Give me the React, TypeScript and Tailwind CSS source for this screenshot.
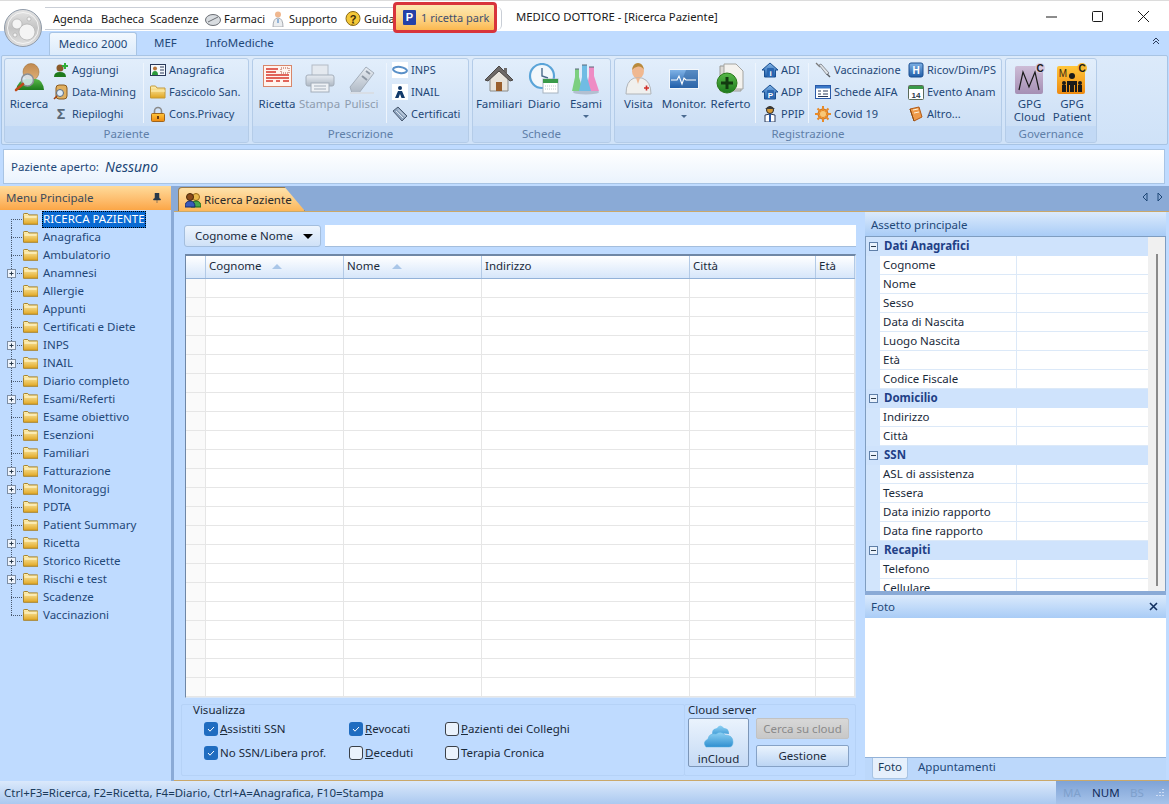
import React from "react";

const S = ({ n = 16, children }: { n?: number; children: React.ReactNode }) => (
  <svg width={n} height={n} viewBox={`0 0 ${n} ${n}`} className="shrink-0">{children}</svg>
);

const Defs = () => (
  <svg width="0" height="0" className="absolute">
    <defs>
      <linearGradient id="folder" x1="0" y1="0" x2="0" y2="1"><stop offset="0" stopColor="#fff3b8" /><stop offset="1" stopColor="#e0a520" /></linearGradient>
      <linearGradient id="gray" x1="0" y1="0" x2="0" y2="1"><stop offset="0" stopColor="#e8edf3" /><stop offset="1" stopColor="#aeb8c4" /></linearGradient>
      <linearGradient id="green" x1="0" y1="0" x2="0" y2="1"><stop offset="0" stopColor="#58b848" /><stop offset="1" stopColor="#1d7a1d" /></linearGradient>
      <linearGradient id="skin" x1="0" y1="0" x2="0" y2="1"><stop offset="0" stopColor="#c08a50" /><stop offset="1" stopColor="#e0b078" /></linearGradient>
      <linearGradient id="blue" x1="0" y1="0" x2="0" y2="1"><stop offset="0" stopColor="#7fb2e6" /><stop offset="1" stopColor="#1f5da8" /></linearGradient>
      <linearGradient id="orange" x1="0" y1="0" x2="0" y2="1"><stop offset="0" stopColor="#ffc63a" /><stop offset="1" stopColor="#ee8a10" /></linearGradient>
      <linearGradient id="purple" x1="0" y1="0" x2="0" y2="1"><stop offset="0" stopColor="#cdbcd6" /><stop offset="1" stopColor="#a58fb4" /></linearGradient>
      <linearGradient id="cloud" x1="0" y1="0" x2="0" y2="1"><stop offset="0" stopColor="#8fd2f4" /><stop offset="1" stopColor="#2f8fd0" /></linearGradient>
    </defs>
  </svg>
);

const IFolderTree = () => (
  <svg width="15" height="12" viewBox="0 0 15 12" className="shrink-0">
    <path d="M.5 2.500V1.200Q.5.500 1.200.500h3.500l1.200 1.400h8.400q.7 0 .7.7v8.700H.5z" fill="url(#folder)" stroke="#a8842c" />
    <path d="M1.500 4h12" stroke="#fffbe0" />
  </svg>
);
const IPersonSearch = () => (
  <S n={32}>
    <ellipse cx="18" cy="9" rx="8" ry="8.500" fill="url(#skin)" stroke="#9a6a30" strokeWidth=".5" />
    <path d="M3 27Q5 17 13 16h10q7 1 8 11z" fill="url(#green)" />
    <circle cx="14.500" cy="17" r="6" fill="#d8e8f4" fillOpacity=".85" stroke="#8a8f96" strokeWidth="1.500" />
    <path d="M10 21l-7 6" stroke="#c04a1a" strokeWidth="2.600" strokeLinecap="round" />
  </S>
);
const IPersonPlus = () => (
  <S>
    <circle cx="7" cy="6" r="3.500" fill="#8a5a2a" />
    <path d="M1 15q0-5 6-5t6 5z" fill="#1d7a1d" />
    <path d="M12 1v6M9 4h6" stroke="#2fae3a" strokeWidth="2" />
  </S>
);
const ICyl = () => (
  <S>
    <rect x="3" y="1" width="11" height="14" rx="3" fill="#e0b060" stroke="#8a5a20" />
    <circle cx="7" cy="9" r="3.500" fill="#dcebf8" stroke="#5a6a80" />
    <path d="M4 12l-3 3" stroke="#a04010" strokeWidth="1.600" />
  </S>
);
const ICard = () => (
  <S>
    <rect x=".5" y="2.500" width="15" height="11" fill="#f4f8fc" stroke="#2a3a5a" />
    <circle cx="5" cy="6.500" r="2" fill="#b8763a" />
    <path d="M2 13q0-4 3-4t3 4z" fill="#2a9a3a" />
    <path d="M10 5h4M10 8h4M10 11h4" stroke="#2a3a5a" />
  </S>
);
const IFolderBig = () => (
  <S>
    <path d="M.5 4V3q0-1 1-1h4l1.500 2h8v10H.5z" fill="url(#folder)" stroke="#c49a38" />
    <path d="M1 7h14" stroke="#fff2b8" />
  </S>
);
const ILock = () => (
  <S>
    <path d="M4.500 8V5a3.500 3.500 0 017 0v3" fill="none" stroke="#8a8a8a" strokeWidth="1.600" />
    <rect x="1.500" y="7.500" width="13" height="8" rx="1" fill="url(#orange)" stroke="#a0641a" />
    <rect x="7" y="10" width="2" height="3" fill="#6a3a10" />
  </S>
);
const IRicetta = () => (
  <svg width="29" height="22" viewBox="0 0 29 22" className="shrink-0 mt-[2px]">
    <rect x=".5" y=".5" width="28" height="21" fill="#fff4ee" stroke="#d8866a" />
    <path d="M3 4h12M3 7h10M3 10h23M3 13h23M3 16h7M13 16h4M20 16h6" stroke="#d8352a" strokeWidth="1.500" />
    <path d="M18 3h8v5h-8z" fill="none" stroke="#b05040" strokeDasharray="1 1" />
  </svg>
);
const IPrinter = () => (
  <S n={32}>
    <rect x="8" y="2" width="16" height="12" fill="#e4e9ef" stroke="#b4bcc6" />
    <rect x="2" y="12" width="28" height="11" rx="2" fill="url(#gray)" stroke="#a4aeba" />
    <rect x="7" y="20" width="18" height="9" fill="#eef1f5" stroke="#a4aeba" />
    <path d="M10 23h12M10 26h12" stroke="#a4aeba" />
  </S>
);
const IEraser = () => (
  <S n={32}>
    <path d="M4 24L20 4l8 6-15 20H6z" fill="url(#gray)" stroke="#a4aeba" />
    <path d="M20 8l4 3M16 13l5 4" stroke="#8e98a4" strokeWidth="2" />
    <path d="M4 30h24" stroke="#d8dee6" strokeWidth="2" />
  </S>
);
const IInps = () => (
  <S>
    <rect width="16" height="16" fill="#fff" />
    <ellipse cx="8" cy="8" rx="7" ry="3" fill="none" stroke="#5a90c8" strokeWidth="2" transform="rotate(8 8 8)" />
  </S>
);
const IInail = () => (
  <S>
    <rect width="16" height="16" fill="#fff" />
    <circle cx="8" cy="4" r="2" fill="#123a6a" />
    <path d="M3 14l3-7h4l3 7H9.500L8 10l-1.500 4z" fill="#123a6a" />
  </S>
);
const ICert = () => (
  <S>
    <path d="M1 5l5-4 9 9-5 5z" fill="#8ea4be" stroke="#4a5a70" />
    <path d="M4 5l7 7M6 3.500l7 7" stroke="#dfe8f2" />
  </S>
);
const IHome = () => (
  <S n={32}>
    <path d="M7 15v13h18V15L16 7z" fill="#e8e4dc" stroke="#8a8a86" />
    <path d="M2 17L16 3l14 14-3 1L16 8 5 18z" fill="#6e6a68" stroke="#4a4644" />
    <path d="M13 19h6v9h-6z" fill="#9a5f2c" />
    <path d="M21 5h3v6l-3-3z" fill="#6e6a68" />
  </S>
);
const IClock = () => (
  <S n={32}>
    <circle cx="14" cy="13" r="12" fill="#f2f7fb" stroke="#5aa4d8" strokeWidth="2.200" />
    <path d="M14 5v8l6 2" stroke="#4a6a8a" strokeWidth="1.400" fill="none" />
    <rect x="15" y="16" width="15" height="14" fill="#fff" stroke="#a8b4c0" />
    <rect x="15" y="16" width="15" height="4" fill="#3a9a4a" />
    <path d="M17 23h11M17 26h11" stroke="#c0c8d0" strokeDasharray="1 1" />
  </S>
);
const IFlask = () => (
  <S n={32}>
    <ellipse cx="16" cy="29" rx="13" ry="2.500" fill="#8d9aaa" fillOpacity=".5" />
    <path d="M5 6h4v8l4 14H2l3-14z" fill="#7ccf80" />
    <path d="M19 4h5v9l5 15H16l3-15z" fill="#ee8cc4" />
    <path d="M12 2h5v12l4 14H9l3-14z" fill="#70bce4" />
    <path d="M12 2h5M5 6h4M19 4h5" stroke="#5a6a7a" />
  </S>
);
const IDoctor = () => (
  <S n={32}>
    <ellipse cx="15" cy="8" rx="6" ry="7.500" fill="#f0b890" />
    <path d="M9 7q1-7 6-7t6 7q-2-4-6-3.500T9 7z" fill="#b88a3c" />
    <path d="M3 31q0-13 8-16h8q9 3 9 16z" fill="#f0f0ee" stroke="#b0b4b8" />
    <path d="M13 15l2 6 2-6z" fill="#f0b890" />
    <path d="M21 25h5M23.500 22.500v5" stroke="#d0302a" strokeWidth="1.600" />
  </S>
);
const IMonitor = () => (
  <S n={32}>
    <path d="M1 6h30v20H1z" fill="#f2f6fa" />
    <path d="M2 7h28v18H2z" fill="url(#blue)" />
    <path d="M18 7h12v18H11z" fill="#3a6ea8" fillOpacity=".55" />
    <path d="M3 17h6l2-4 3 8 2-6 2 2h10" fill="none" stroke="#fff" strokeWidth="1.100" />
  </S>
);
const IDocPlus = () => (
  <S n={32}>
    <path d="M5 3h13l8 8v17H5z" fill="#dcdad6" stroke="#9a9a96" />
    <path d="M9 1h12l7 7v18H9z" fill="#f4f2ee" stroke="#a4a4a0" />
    <circle cx="12" cy="20" r="10" fill="url(#green)" stroke="#2a7a1a" />
    <path d="M12 14v12M6 20h12" stroke="#123a10" strokeWidth="3" />
  </S>
);
const IHouseS = ({ l }: { l: string }) => (
  <S>
    <path d="M0 8l8-7 8 7h-2.500v7h-11V8z" fill="url(#blue)" stroke="#1a4f90" />
    <rect x="5" y="6" width="7" height="9" rx="1" fill="#2a66b0" />
    <text x="8.500" y="13.500" fontSize="8" fontWeight="700" fill="#fff" textAnchor="middle" fontFamily="Liberation Sans">{l}</text>
  </S>
);
const IPpip = () => (
  <S>
    <circle cx="8" cy="4" r="3.500" fill="#d69a38" stroke="#2a2a2a" />
    <path d="M3 3q5-5 10 0z" fill="#3a3a3a" />
    <path d="M3 16V9q5-2 10 0v7z" fill="#fff" stroke="#2a3a5a" />
    <path d="M8 8v8" stroke="#2a5aa8" strokeWidth="2" />
  </S>
);
const ISyringe = () => (
  <S>
    <path d="M1 1l4 4" stroke="#7a7a7a" strokeWidth="1.200" />
    <path d="M4 3l2-1 8 9-2 2z" fill="#dfe3e8" stroke="#8a8f96" />
    <path d="M12 12l3 3" stroke="#5a5f66" strokeWidth="1.400" />
  </S>
);
const ITable = () => (
  <S>
    <rect x=".5" y="1.500" width="15" height="13" fill="#fff" stroke="#2a5aa8" />
    <rect x="1" y="2" width="14" height="2.500" fill="#3a78c8" />
    <path d="M3 7h3M3 10h3M8 7h5M8 10h5M3 12.500h10" stroke="#2a3a5a" />
  </S>
);
const IGear = () => (
  <S>
    <circle cx="8" cy="8" r="5" fill="#f0a040" stroke="#c06a18" />
    <path d="M8 0v16M0 8h16M2.500 2.500l11 11M13.500 2.500l-11 11" stroke="#e88a28" strokeWidth="2" />
    <circle cx="8" cy="8" r="3" fill="#f8c878" />
  </S>
);
const IH = () => (
  <S>
    <rect x="1" y="1" width="14" height="14" rx="2" fill="url(#blue)" stroke="#1a4f90" />
    <text x="8" y="12" fontSize="10" fontWeight="700" fill="#fff" textAnchor="middle" fontFamily="Liberation Sans">H</text>
  </S>
);
const ICal = () => (
  <S>
    <rect x=".5" y="1.500" width="15" height="14" rx="1" fill="#fff" stroke="#5a6a5a" />
    <rect x="1" y="2" width="14" height="3" fill="#3a9a4a" />
    <text x="8" y="13.500" fontSize="8" fontWeight="700" fill="#2a3a4a" textAnchor="middle" fontFamily="Liberation Sans">14</text>
  </S>
);
const IBook = () => (
  <S>
    <path d="M2 3l9-2 3 10-8 4z" fill="#ee9a4a" stroke="#b05a18" />
    <path d="M5 4l5-1M6 7l5-1" stroke="#fff2d8" />
    <path d="M2 3l4 12" stroke="#8a4a10" />
  </S>
);
const IGpgCloud = () => (
  <svg width="32" height="32" viewBox="0 0 32 32" className="shrink-0">
    <rect x="1" y="3" width="28" height="28" rx="2" fill="url(#purple)" />
    <path d="M5 27L9 9l6 15 6-15 4 18" fill="none" stroke="#1a1a1a" strokeWidth="1.200" />
    <circle cx="26" cy="5" r="5" fill="#d6c8de" />
    <text x="26" y="9" fontSize="10" fontWeight="700" fill="#1a1a1a" textAnchor="middle" fontFamily="Liberation Sans">C</text>
  </svg>
);
const IGpgPat = () => (
  <svg width="32" height="32" viewBox="0 0 32 32" className="shrink-0">
    <rect x="1" y="3" width="28" height="28" rx="2" fill="url(#orange)" />
    <text x="7" y="14" fontSize="10" fill="#3a2a10" textAnchor="middle" fontFamily="Liberation Sans">M</text>
    <circle cx="26" cy="5" r="5" fill="#f8b830" />
    <text x="26" y="9" fontSize="10" fontWeight="700" fill="#1a1a1a" textAnchor="middle" fontFamily="Liberation Sans">C</text>
    <circle cx="16" cy="13" r="3" fill="#1a1a1a" />
    <path d="M11 29V18h10v11h-2v-7h-1v7h-4v-7h-1v7z" fill="#1a1a1a" />
    <circle cx="8" cy="20" r="2" fill="#1a1a1a" />
    <path d="M6 29v-7h4v7z" fill="#1a1a1a" />
    <circle cx="24" cy="20" r="2" fill="#1a1a1a" />
    <path d="M22 29v-7h4v7z" fill="#1a1a1a" />
  </svg>
);
const IPill = () => (
  <S>
    <ellipse cx="8" cy="9" rx="7.500" ry="5.500" fill="#d8dce0" stroke="#6a6e74" />
    <path d="M3 11l10-5" stroke="#6a6e74" />
  </S>
);
const ISupport = () => (
  <S>
    <circle cx="8" cy="3.500" r="3" fill="#f0b890" />
    <path d="M3 16q0-9 5-9t5 9z" fill="#eceef0" stroke="#a8acb2" />
    <path d="M8 8v4" stroke="#3a7ac0" />
  </S>
);
const IHelp = () => (
  <S>
    <circle cx="8" cy="7.500" r="7" fill="#f4c838" stroke="#8a6a18" />
    <path d="M5 15l3-3h2z" fill="#8a6a18" />
    <text x="8" y="11.500" fontSize="11" fontWeight="700" fill="#3a2a08" textAnchor="middle" fontFamily="Liberation Sans">?</text>
  </S>
);
const IOrb = () => (
  <svg width="38" height="38" viewBox="0 0 38 38">
    <defs>
      <linearGradient id="orb" x1="0" y1="0" x2="0" y2="1"><stop offset="0" stopColor="#e6e6e6" /><stop offset=".5" stopColor="#c4c4c4" /><stop offset="1" stopColor="#e2e2e2" /></linearGradient>
    </defs>
    <circle cx="19" cy="19" r="18.500" fill="url(#orb)" stroke="#8f9aa8" />
    <circle cx="19" cy="19" r="15.500" fill="none" stroke="#f4f4f4" />
    <g fill="#f4f4f4" stroke="#a8a8a8" strokeWidth=".6">
      <circle cx="23" cy="23" r="8" />
      <circle cx="13" cy="15" r="5" />
      <circle cx="25" cy="10" r="2" />
      <circle cx="11" cy="26" r="2" />
    </g>
  </svg>
);
const ICloud = () => (
  <svg width="32" height="26" viewBox="0 0 32 26">
    <path d="M10 14q-3-8 4-9 3-5 7 0 5 0 5 6-8-2-16 3z" fill="url(#cloud)" />
    <path d="M3 24q-4-5 2-8 1-6 8-5 5-4 9 1 8 0 8 7 0 5-4 5z" fill="url(#cloud)" stroke="#5ab0e0" strokeWidth=".5" />
  </svg>
);
const IPeople = () => (
  <S>
    <circle cx="11" cy="5" r="3.500" fill="#e8b84a" stroke="#9a6a18" />
    <path d="M6 15q0-6 5-6t5 6z" fill="#4aa84a" stroke="#1a6a1a" />
    <circle cx="5" cy="5" r="3.500" fill="#8a4a1a" stroke="#4a2a08" />
    <path d="M0 15q0-6 5-6t5 6z" fill="#3a5ab8" stroke="#1a2a6a" />
  </S>
);

const Large = ({ w, icon, label, label2, arrow, disabled }: { w: number; icon: React.ReactNode; label: string; label2?: string; arrow?: boolean; disabled?: boolean }) => (
  <div style={{ width: w }} className="flex flex-col items-center shrink-0">
    <div className="h-[38px] pt-[4px] flex justify-center w-full">{icon}</div>
    <div className={`h-[13px] leading-[14px] whitespace-nowrap ${disabled ? "text-[#8e9cae]" : "text-[#1f4878]"}`}>{label}</div>
    {label2 && <div className="h-[13px] leading-[14px] whitespace-nowrap text-[#1f4878]">{label2}</div>}
    {arrow && <div className="mt-[5px] w-0 h-0 border-x-[3px] border-x-transparent border-t-[3px] border-t-[#4a6a90]" />}
  </div>
);
const Small = ({ icon, label }: { icon: React.ReactNode; label: string }) => (
  <div className="flex items-center h-[22px] gap-[3px] whitespace-nowrap text-[#1f4878] text-[11px]">
    {icon}
    <span>{label}</span>
  </div>
);
const Sep = () => <div className="w-px h-[60px] self-center bg-[#a9c3e3] border-r border-[#eef5fd] shrink-0" />;
const Group = ({ w, label, children }: { w: number; label: string; children: React.ReactNode }) => (
  <div style={{ width: w }} className="shrink-0 h-[85px] rounded-[3px] border border-[#b4cce8] bg-gradient-to-b from-[#e2eefb] to-[#c8dcf4] flex flex-col overflow-hidden">
    <div className="h-[67px] flex items-stretch">{children}</div>
    <div className="h-[16px] leading-[15px] text-center bg-[#c2d9f5] text-[#5f7fa8]">{label}</div>
  </div>
);

const TREE: [string, boolean][] = [
  ["RICERCA PAZIENTE", false], ["Anagrafica", false], ["Ambulatorio", false], ["Anamnesi", true], ["Allergie", false], ["Appunti", false],
  ["Certificati e Diete", false], ["INPS", true], ["INAIL", true], ["Diario completo", false], ["Esami/Referti", true], ["Esame obiettivo", false],
  ["Esenzioni", false], ["Familiari", false], ["Fatturazione", true], ["Monitoraggi", true], ["PDTA", false], ["Patient Summary", false],
  ["Ricetta", true], ["Storico Ricette", true], ["Rischi e test", true], ["Scadenze", false], ["Vaccinazioni", false],
];

const TreeRow = ({ label, plus, first, last }: { label: string; plus: boolean; first: boolean; last: boolean }) => (
  <div className="flex items-center h-[18px]">
    <svg width="23" height="18" viewBox="0 0 23 18" className="shrink-0">
      <path d={`M11.500 ${first ? 9 : 0}V${last ? 9 : 18}`} stroke="#4a5a70" strokeDasharray="1 1" />
      <path d="M11 9.500h12" stroke="#4a5a70" strokeDasharray="1 1" />
      {plus && (
        <g>
          <rect x="7.500" y="5.500" width="8" height="8" fill="#eef4fc" stroke="#7f8fa4" />
          <path d="M9.500 9.500h4M11.500 7.500v4" stroke="#2a3a4a" />
        </g>
      )}
    </svg>
    <div className="w-[15px] mr-[4px] shrink-0 flex"><IFolderTree /></div>
    {first ? (
      <div className="bg-[#0a6ad2] text-white px-[1px] h-[17px] leading-[16px] outline outline-1 outline-dotted outline-black -outline-offset-1 whitespace-nowrap">{label}</div>
    ) : (
      <div className="px-[1px] text-[#1f4878] whitespace-nowrap">{label}</div>
    )}
  </div>
);

const COLS = ["", "Cognome", "Nome", "Indirizzo", "Città", "Età"];
const GRID = "grid grid-cols-[20px_138px_138px_208px_126px_1fr]";

const Check = ({ on, children }: { on?: boolean; children: React.ReactNode }) => (
  <div className="flex items-center gap-[2px] whitespace-nowrap text-[#1a2a3a]">
    {on ? (
      <span className="w-[14px] h-[14px] rounded-[3px] bg-[#1f6cc0] flex items-center justify-center shrink-0">
        <svg width="10" height="10" viewBox="0 0 10 10"><path d="M2 5l2 2.200L8 3" fill="none" stroke="#fff" strokeWidth="1" /></svg>
      </span>
    ) : (
      <span className="w-[14px] h-[14px] rounded-[3px] bg-[#eaf2fc] border border-[#3a4048] shrink-0" />
    )}
    <span>{children}</span>
  </div>
);

const PROPS: [string, string[]][] = [
  ["Dati Anagrafici", ["Cognome", "Nome", "Sesso", "Data di Nascita", "Luogo Nascita", "Età", "Codice Fiscale"]],
  ["Domicilio", ["Indirizzo", "Città"]],
  ["SSN", ["ASL di assistenza", "Tessera", "Data inizio rapporto", "Data fine rapporto"]],
  ["Recapiti", ["Telefono", "Cellulare"]],
];

export default function App() {
  return (
    <div className="w-[1169px] h-[804px] overflow-hidden flex flex-col relative bg-[#bfdbff] text-[11.500px] leading-[16px] [font-family:'Noto_Sans',sans-serif]">
      <Defs />
      {/* Orb */}
      <div className="absolute left-[4px] top-[9px] z-10 flex"><IOrb /></div>

      {/* Title bar */}
      <div className="h-[31px] bg-white shrink-0 flex items-start text-[#1a1a1a] border-t border-[#dcdcdc]">
        <div className="ml-[45px] mt-[6px] h-[23px] w-[348px] flex items-center pl-[8px] border-y border-[#c9ced6] whitespace-nowrap overflow-hidden text-[11px]">
          <span className="w-[48px] shrink-0">Agenda</span>
          <span className="w-[49px] shrink-0">Bacheca</span>
          <span className="w-[55px] shrink-0">Scadenze</span>
          <span className="w-[19px] shrink-0 flex"><IPill /></span>
          <span className="w-[46px] shrink-0">Farmaci</span>
          <span className="w-[19px] shrink-0 flex"><ISupport /></span>
          <span className="w-[56px] shrink-0">Supporto</span>
          <span className="w-[19px] shrink-0 flex"><IHelp /></span>
          <span className="shrink-0">Guida</span>
        </div>
        <div className="mt-[1px] w-[104px] h-[31px] rounded-[4px] border-[3px] border-[#d8343c] z-10 bg-gradient-to-b from-[#fde8b0] via-[#fdd68a] to-[#fbb84e] flex items-center pl-[7px] gap-[5px] text-[#3f4f70] whitespace-nowrap text-[11px]">
          <span className="w-[13px] h-[15px] bg-[#2541a8] text-white text-[11px] font-bold leading-[15px] text-center rounded-[1px] [font-family:'Liberation_Sans',sans-serif]">P</span>
          <span>1 ricetta park</span>
        </div>
        <div className="mt-[6px] w-[5px] h-[23px] rounded-r-full border-r border-[#c9ced6]" />
        <div className="ml-[14px] mt-[8px] text-[11.300px] text-[#1a1a1a] whitespace-nowrap">MEDICO DOTTORE - [Ricerca Paziente]</div>
        <div className="ml-auto flex h-[30px] items-center pr-[20px] gap-[35px]">
          <svg width="11" height="11" viewBox="0 0 11 11"><path d="M0 6h11" stroke="#1a1a1a" /></svg>
          <svg width="11" height="11" viewBox="0 0 11 11"><rect x=".5" y=".5" width="10" height="10" rx="1" fill="none" stroke="#1a1a1a" /></svg>
          <svg width="11" height="11" viewBox="0 0 11 11"><path d="M0 0l11 11M11 0L0 11" stroke="#1a1a1a" /></svg>
        </div>
      </div>

      {/* Ribbon tabs */}
      <div className="h-[24px] shrink-0 flex items-end pl-[49px] text-[#1f4878] relative">
        <div className="w-[88px] h-[23px] rounded-t-[3px] border border-b-0 border-[#a8c4e4] bg-gradient-to-b from-[#f2f8fe] to-[#dcebfb] text-center leading-[22px]">Medico 2000</div>
        <div className="ml-[17px] h-[23px] leading-[22px]">MEF</div>
        <div className="ml-[29px] h-[23px] leading-[22px]">InfoMediche</div>
        <svg width="10" height="10" viewBox="0 0 10 10" className="ml-auto mr-[8px] mb-[9px]"><path d="M2 5l3-3 3 3M2 8l3-3 3 3" fill="none" stroke="#2a3a5a" /></svg>
      </div>

      {/* Ribbon */}
      <div className="h-[90px] shrink-0 mx-[1px] border border-[#a8c4e4] rounded-[2px] bg-gradient-to-b from-[#dceafa] to-[#cfe2f8] flex items-start pt-[2px] pl-[2px] gap-[3px]">
        <Group w={245} label="Paziente">
          <div className="pl-[2px] flex"><Large w={44} icon={<IPersonSearch />} label="Ricerca" /></div>
          <div className="w-[92px] pl-[2px] shrink-0"><Small icon={<IPersonPlus />} label="Aggiungi" /><Small icon={<ICyl />} label="Data-Mining" /><Small icon={<span className="w-[16px] text-center text-[14px] text-[#5a6a7a] font-bold">Σ</span>} label="Riepiloghi" /></div>
          <Sep />
          <div className="pl-[6px]"><Small icon={<ICard />} label="Anagrafica" /><Small icon={<IFolderBig />} label="Fascicolo San." /><Small icon={<ILock />} label="Cons.Privacy" /></div>
        </Group>
        <Group w={217} label="Prescrizione">
          <div className="pl-[1px] flex"><Large w={46} icon={<IRicetta />} label="Ricetta" /></div>
          <Large w={39} icon={<IPrinter />} label="Stampa" disabled />
          <Large w={45} icon={<IEraser />} label="Pulisci" disabled />
          <div className="w-[2px] shrink-0" />
          <Sep />
          <div className="pl-[5px]"><Small icon={<IInps />} label="INPS" /><Small icon={<IInail />} label="INAIL" /><Small icon={<ICert />} label="Certificati" /></div>
        </Group>
        <Group w={139} label="Schede">
          <Large w={52} icon={<IHome />} label="Familiari" />
          <Large w={38} icon={<IClock />} label="Diario" />
          <Large w={46} icon={<IFlask />} label="Esami" arrow />
        </Group>
        <Group w={388} label="Registrazione">
          <Large w={47} icon={<IDoctor />} label="Visita" />
          <Large w={44} icon={<IMonitor />} label="Monitor." arrow />
          <Large w={49} icon={<IDocPlus />} label="Referto" />
          <Sep />
          <div className="pl-[6px] w-[52px] shrink-0"><Small icon={<IHouseS l="i" />} label="ADI" /><Small icon={<IHouseS l="P" />} label="ADP" /><Small icon={<IPpip />} label="PPIP" /></div>
          <Sep />
          <div className="pl-[6px] w-[99px] shrink-0"><Small icon={<ISyringe />} label="Vaccinazione" /><Small icon={<ITable />} label="Schede AIFA" /><Small icon={<IGear />} label="Covid 19" /></div>
          <div><Small icon={<IH />} label="Ricov/Dim/PS" /><Small icon={<ICal />} label="Evento Anam" /><Small icon={<IBook />} label="Altro..." /></div>
        </Group>
        <Group w={92} label="Governance">
          <Large w={47} icon={<IGpgCloud />} label="GPG" label2="Cloud" />
          <Large w={38} icon={<IGpgPat />} label="GPG" label2="Patient" />
        </Group>
      </div>

      {/* Patient bar */}
      <div className="h-[35px] shrink-0 ml-[3px] mr-[4px] mt-[4px] border border-[#a8c4e4] bg-gradient-to-b from-white to-[#eaf3fd] flex items-center pl-[7px] text-[#1f4878]">
        <span className="w-[94px]">Paziente aperto:</span>
        <span className="italic text-[14px]">Nessuno</span>
      </div>

      {/* Main */}
      <div className="flex-1 min-h-0 mt-[2px] flex">
        {/* Sidebar */}
        <div className="w-[171px] shrink-0 flex flex-col">
          <div className="h-[24px] shrink-0 bg-gradient-to-b from-[#fedb9a] to-[#fba646] flex items-center justify-between pl-[6px] pr-[10px] text-[#3a4a5a]">
            <span>Menu Principale</span>
            <svg width="8" height="10" viewBox="0 0 8 10"><path d="M2 0h4v5l1.500 1v1h-7V6L2 5zM4 7v3" fill="#2a3a4a" stroke="#2a3a4a" strokeWidth=".5" /></svg>
          </div>
          <div className="pt-0">
            {TREE.map(([t, p], i) => <TreeRow key={t} label={t} plus={p} first={i === 0} last={i === TREE.length - 1} />)}
          </div>
        </div>

        {/* Splitter + doc */}
        <div className="w-[3px] shrink-0 bg-[#8aaad6]" />
        <div className="flex-1 min-w-0 flex flex-col">
          <div className="h-[25px] shrink-0 bg-[#8aaad6] flex items-end pl-[4px] relative">
            <div className="w-[127px] h-[24px] flex items-center gap-[3px] pl-[6px] border border-b-0 border-[#9a7a48] rounded-t-[4px] [clip-path:polygon(0_0,84%_0,100%_100%,0_100%)] bg-gradient-to-b from-[#fee2aa] to-[#fcb75a] text-[#2a2a2a]">
              <IPeople />
              <span>Ricerca Paziente</span>
            </div>
            <div className="ml-auto mr-[6px] mb-[9px] flex gap-[9px]">
              <svg width="6" height="10" viewBox="0 0 6 10"><path d="M5 1L1 5l4 4z" fill="none" stroke="#1f4878" /></svg>
              <svg width="6" height="10" viewBox="0 0 6 10"><path d="M1 1l4 4-4 4z" fill="none" stroke="#1f4878" /></svg>
            </div>
          </div>
          <div className="flex-1 min-h-0 flex border-y border-[#caa86a]">
            {/* Left content */}
            <div className="w-[691px] shrink-0 flex flex-col pl-[10px] pr-[9px] pt-[13px]">
              <div className="flex h-[22px] gap-[4px] shrink-0">
                <div className="w-[137px] rounded-[3px] border border-[#a4bedd] bg-gradient-to-b from-[#eef5fd] to-[#cfe1f7] flex items-center justify-between pl-[10px] pr-[7px] text-[#1a2a3a]">
                  <span>Cognome e Nome</span>
                  <span className="w-0 h-0 border-x-[5px] border-x-transparent border-t-[5px] border-t-black" />
                </div>
                <div className="flex-1 bg-white border-b border-[#a4bedd]" />
              </div>
              <div className="mt-[7px] ml-[1px] h-[444px] shrink-0 bg-white border border-[#dbe7f6] border-l-[#6f87a6] border-t-2 border-t-[#6f87a6] overflow-hidden">
                <div className={`${GRID} h-[23px] border-b border-[#93b2d8] bg-gradient-to-b from-white to-[#d6e6fa]`}>
                  {COLS.map((c, i) => (
                    <div key={i} className="flex items-center pl-[3px] pb-[2px] border-r border-[#b3cae6] text-[#1a2a3a]">
                      <span>{c}</span>
                      {(i === 1 || i === 2) && <span className={`w-0 h-0 border-x-[5px] border-x-transparent border-b-[5px] border-b-[#a9c6e8] ${i === 1 ? "ml-[10px]" : "ml-[12px]"}`} />}
                    </div>
                  ))}
                </div>
                {Array.from({ length: 22 }).map((_, r) => (
                  <div key={r} className={`${GRID} h-[19px] border-b border-[#e6e6e6]`}>
                    {COLS.map((_, i) => <div key={i} className={`border-r border-[#e6e6e6] ${i === 0 ? "bg-[#fafafa]" : ""}`} />)}
                  </div>
                ))}
              </div>
              <div className="mt-[6px] flex -ml-[3px] h-[72px] shrink-0">
                <div className="w-[504px] border border-[#b5d2f7] pl-[11px] rounded-[2px] text-[#1a2a3a]">
                  <div className="-mt-[3px] h-[16px]">Visualizza</div>
                  <div className="flex pl-[11px] mt-[3px]">
                    <div className="w-[145px] flex flex-col gap-[8px]"><Check on><u>A</u>ssistiti SSN</Check><Check on>No SSN/Libera prof.</Check></div>
                    <div className="w-[96px] flex flex-col gap-[8px]"><Check on><u>R</u>evocati</Check><Check><u>D</u>eceduti</Check></div>
                    <div className="flex flex-col gap-[8px]"><Check><u>P</u>azienti dei Colleghi</Check><Check>Terapia Cronica</Check></div>
                  </div>
                </div>
                <div className="flex-1 -ml-px border border-[#b5d2f7] pl-[3px] rounded-[2px] text-[#1a2a3a]">
                  <div className="-mt-[3px] h-[13px] leading-[16px]">Cloud server</div>
                  <div className="flex gap-[7px] mt-[3px]">
                    <div className="w-[61px] h-[49px] rounded-[2px] border border-[#7c96b8] bg-gradient-to-b from-[#eaf3fd] to-[#c5daf5] flex flex-col items-center">
                      <div className="h-[33px] pt-[4px]"><ICloud /></div>
                      <div className="leading-[14px]">inCloud</div>
                    </div>
                    <div className="w-[93px] flex flex-col gap-[6px]">
                      <div className="h-[21px] rounded-[2px] border border-[#c2c2c2] bg-gradient-to-b from-[#d8d8d8] to-[#c8c8c8] text-center leading-[19px] text-[#8a8a8a]">Cerca su cloud</div>
                      <div className="h-[22px] rounded-[2px] border border-[#86a2c6] bg-gradient-to-b from-[#eaf3fd] to-[#bcd5f4] text-center leading-[20px]">Gestione</div>
                    </div>
                  </div>
                </div>
              </div>
            </div>

            {/* Right panel */}
            <div className="flex-1 min-w-0 flex flex-col mr-[3px] text-[#1a2a3a]">
              <div className="h-[24px] pt-[2px] shrink-0 bg-gradient-to-b from-[#dbeafc] to-[#a9ccf6] flex items-center pl-[6px] text-[#1f4878]">Assetto principale</div>
              <div className="h-[355px] shrink-0 border border-[#7f9dc0] border-b-0 bg-white flex overflow-hidden">
                <div className="flex-1 min-w-0">
                  {PROPS.map(([g, items]) => (
                    <div key={g}>
                      <div className="h-[19px] bg-[#cfe3fc] flex items-center pl-[3px] pb-[1px]">
                        <span className="w-[9px] h-[9px] border border-[#5f7fa8] bg-[#eaf2fc] flex items-center justify-center mr-[6px]"><span className="w-[5px] h-px bg-[#2a3a4a]" /></span>
                        <span className="font-bold text-[#1f3f86]">{g}</span>
                      </div>
                      {items.map((p) => (
                        <div key={p} className="flex h-[19px] border-l-[14px] border-l-[#d2e5fc]">
                          <div className="w-[137px] pl-[3px] pt-[1px] border-r border-b border-[#dce9f8]">{p}</div>
                          <div className="flex-1 border-b border-[#dce9f8]" />
                        </div>
                      ))}
                    </div>
                  ))}
                </div>
                <div className="w-[17px] shrink-0 bg-[#f0f0f0] flex justify-center pt-[17px]">
                  <div className="w-[2px] h-[332px] bg-[#8a8a8a]" />
                </div>
              </div>
              <div className="h-[4px] shrink-0 bg-[#8aaad6]" />
              <div className="h-[23px] shrink-0 bg-gradient-to-b from-[#dbeafc] to-[#a9ccf6] flex items-center justify-between pl-[6px] pr-[8px] text-[#1f4878]">
                <span>Foto</span>
                <svg width="9" height="9" viewBox="0 0 9 9"><path d="M1 1l7 7M8 1L1 8" stroke="#123060" strokeWidth="1.600" /></svg>
              </div>
              <div className="flex-1 min-h-0 bg-white" />
              <div className="h-[23px] shrink-0 bg-[#bcd8fb] border-t border-[#93b2d8] flex pl-[7px] text-[#1f4878]">
                <div className="w-[36px] h-[21px] rounded-b-[3px] border border-t-0 border-[#a8c4e4] bg-[#e6f0fc] text-center leading-[18px] text-[#1a3a5a]">Foto</div>
                <div className="ml-[10px] leading-[18px]">Appuntamenti</div>
              </div>
            </div>
          </div>
        </div>
      </div>

      {/* Status bar */}
      <div className="h-[23px] shrink-0 bg-gradient-to-b from-[#dbe9fb] to-[#abc9f0] flex items-center text-[#1a3a5a]">
        <span className="pl-[4px] flex-1">Ctrl+F3=Ricerca, F2=Ricetta, F4=Diario, Ctrl+A=Anagrafica, F10=Stampa</span>
        <div className="w-[113px] h-full bg-gradient-to-b from-[#7fa3d6] to-[#a6c3ea] flex items-center pl-[7px] text-[#7ea0cc]">
          <span className="w-[29px]">MA</span>
          <span className="w-[38px] text-[#102a5a]">NUM</span>
          <span>BS</span>
          <svg width="10" height="10" viewBox="0 0 10 10" className="ml-auto mr-[4px]"><path d="M8 1v1M8 4v1M8 7v1M5 4v1M5 7v1M2 7v1" stroke="#dfeafa" strokeWidth="1.500" /></svg>
        </div>
      </div>
    </div>
  );
}
